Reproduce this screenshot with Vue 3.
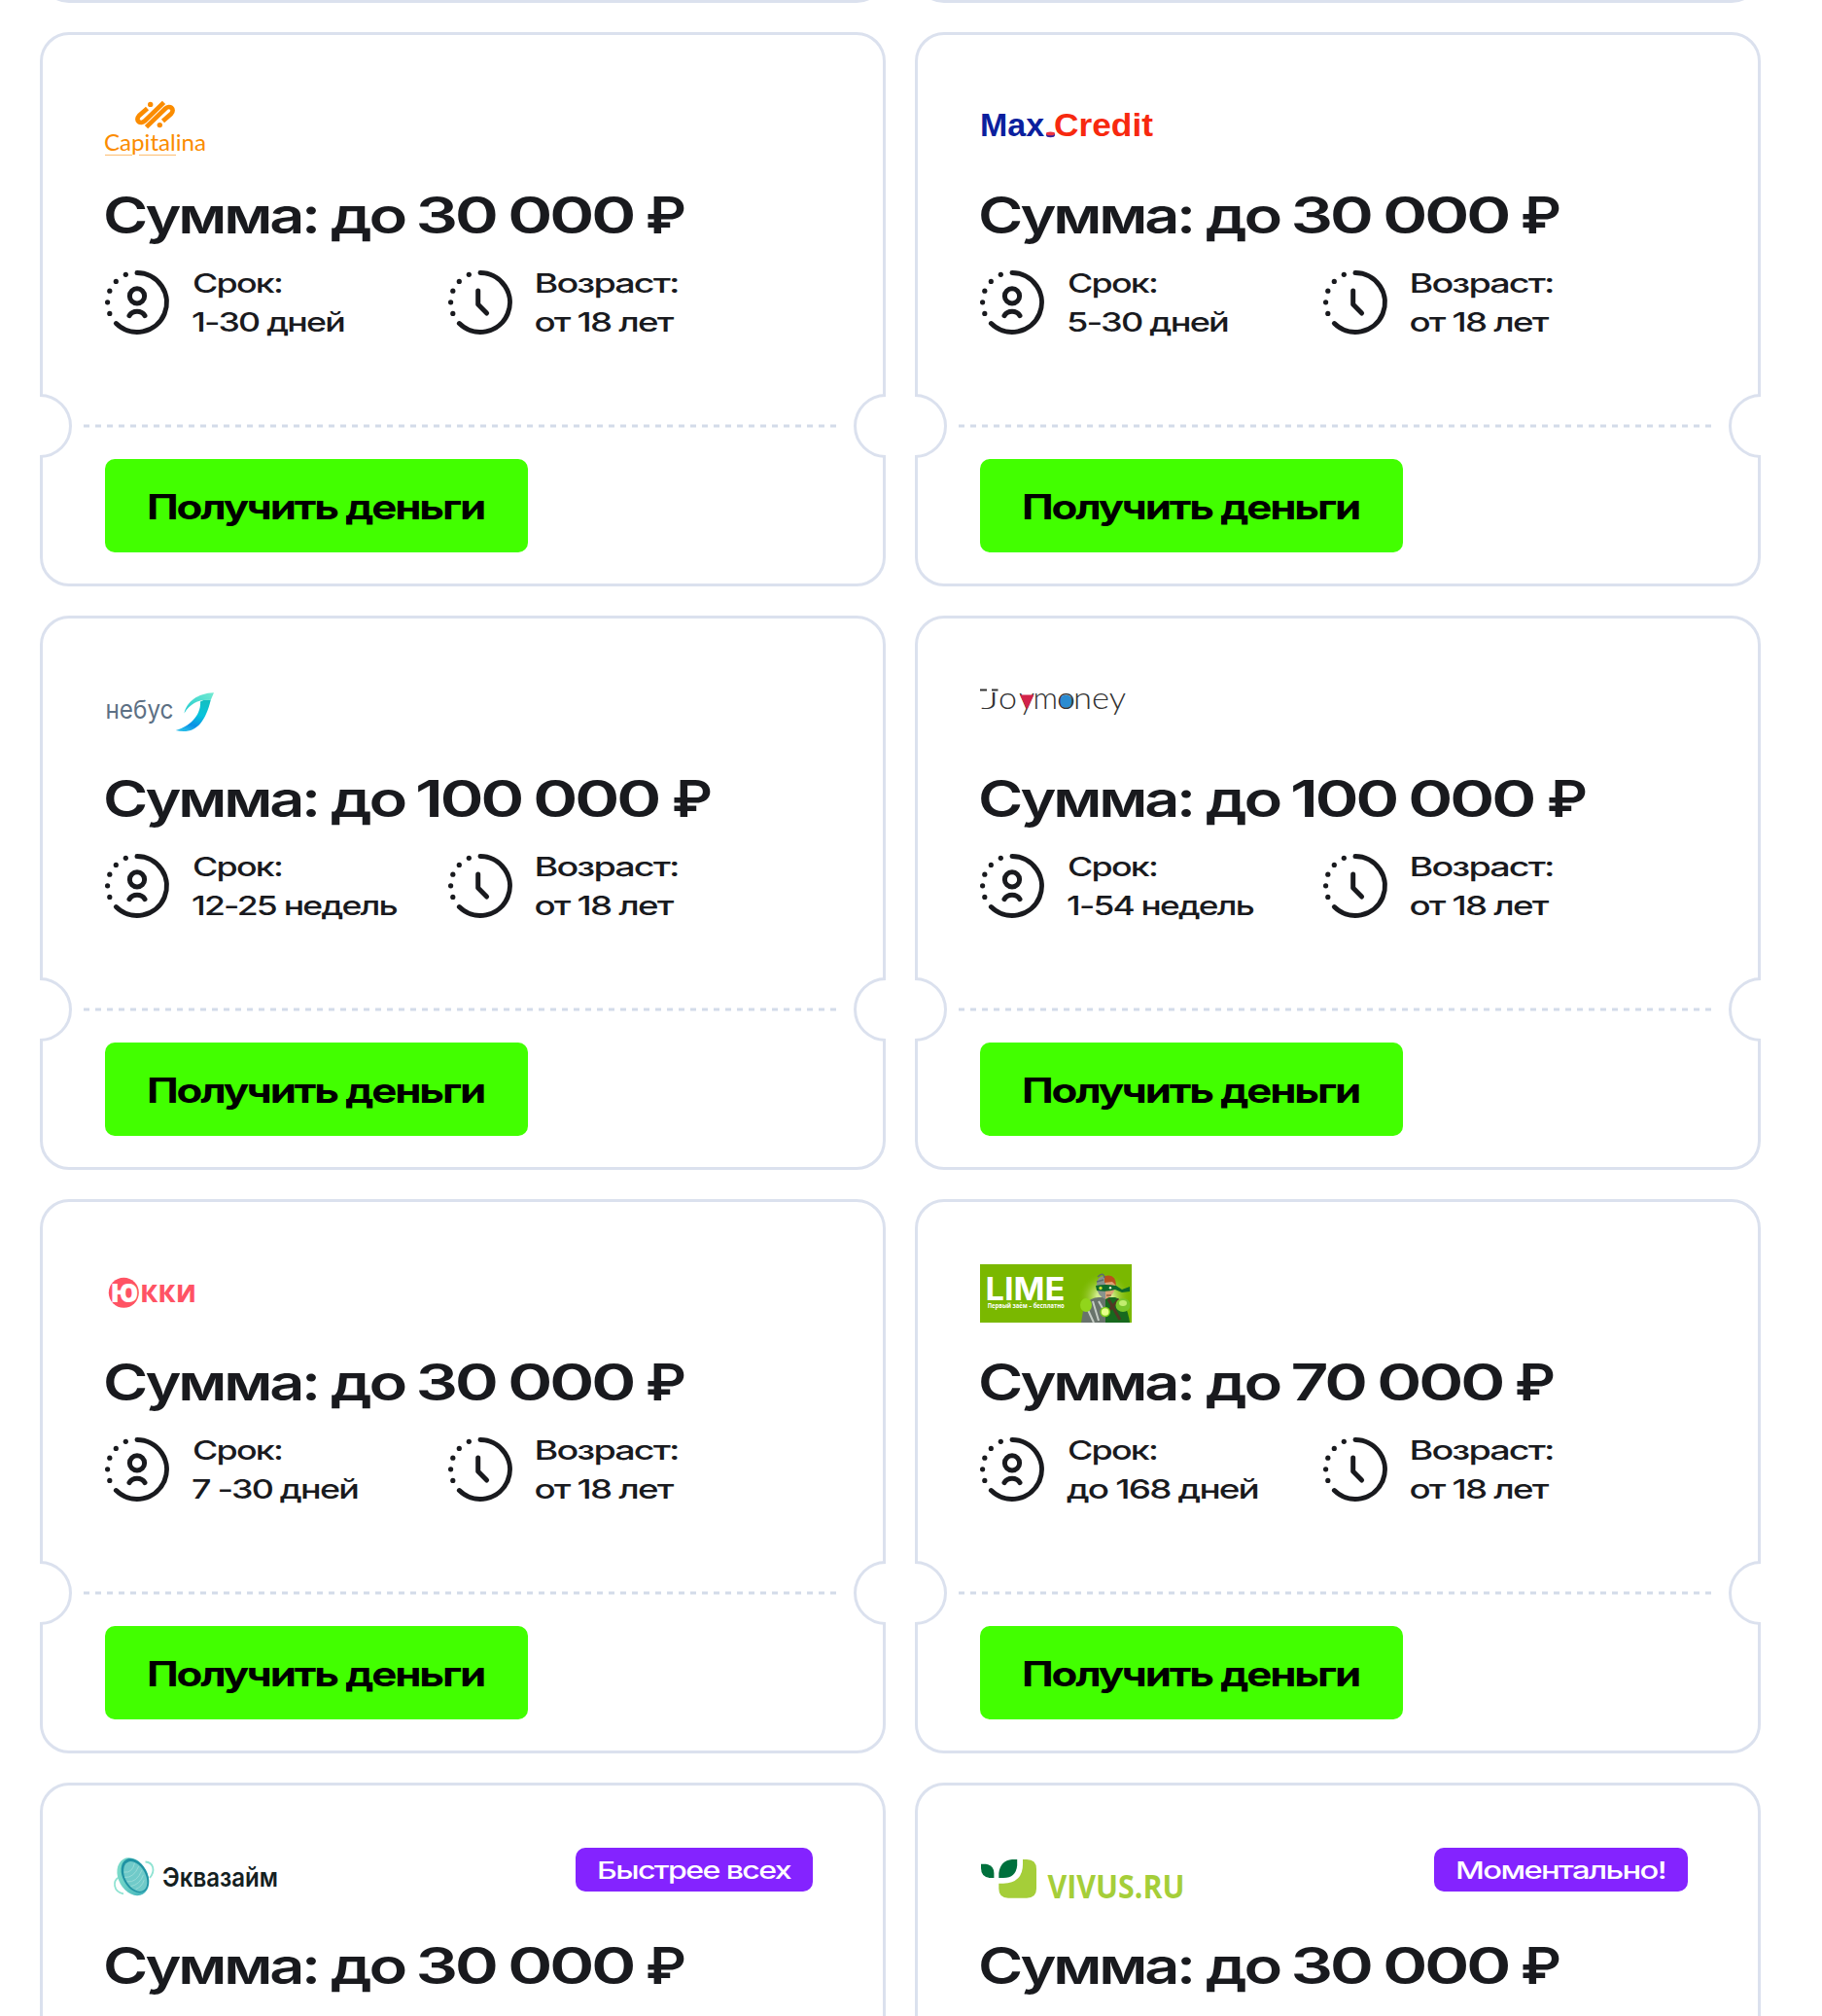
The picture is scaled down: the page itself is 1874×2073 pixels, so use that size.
<template>
  <div class="offers-page">
    <div class="offers-grid">
      <!-- Bottom edge of the previous row -->
      <div class="card-tail"></div>
      <div class="card-tail"></div>

      <div v-for="offer in offers" :key="offer.logo" class="offer-card">
        <div class="offer-header">
          <svg v-if="offer.logo === 'capitalina'" class="logo" width="180" height="60" fill="#fb8c00">
            <g fill="none" stroke="#fb8c00" stroke-width="4.7">
              <path d="M43.5 11.5L35 19C30.5 24 36.5 28.5 41 24.3L60.5 5.4" />
              <path d="M59.5 24.5L68 17C72.5 12 66.5 7.5 62 11.7L42.5 30.6" />
            </g>
            <circle cx="46.7" cy="7.4" r="2.7" />
            <circle cx="56.3" cy="28.6" r="2.7" />
            <text x="-1" y="55" class="lato" font-size="23" textLength="105" lengthAdjust="spacingAndGlyphs">Capitalina</text>
            <path d="M0 59.4H28M35 59.4H73" stroke="#fdbb6c" stroke-width="1" />
          </svg>

          <svg v-else-if="offer.logo === 'maxcredit'" class="logo" width="190" height="60">
            <g class="liberation" font-size="33" font-weight="700">
              <text x="0" y="40" fill="#0b1f9e" textLength="66" lengthAdjust="spacingAndGlyphs">Max</text>
              <text x="76" y="40" fill="#f7290f" textLength="102" lengthAdjust="spacingAndGlyphs">Credit</text>
            </g>
            <ellipse cx="72.5" cy="38.8" rx="4.6" ry="2.5" fill="#3b2597" />
            <ellipse cx="72.5" cy="37.4" rx="4.6" ry="1.8" fill="#ec3341" />
          </svg>

          <svg v-else-if="offer.logo === 'nebus'" class="logo" width="180" height="60">
            <defs>
              <linearGradient id="wing" x1="0" y1="1" x2="1" y2="0">
                <stop offset="0" stop-color="#1ecbd0" />
                <stop offset="1" stop-color="#74ead0" />
              </linearGradient>
              <linearGradient id="tail" x1="0.7" y1="0" x2="0.4" y2="1">
                <stop offset="0" stop-color="#12bfc2" />
                <stop offset="0.45" stop-color="#08c4dc" />
                <stop offset="0.8" stop-color="#0a8fe6" />
                <stop offset="1" stop-color="#25b9e8" />
              </linearGradient>
            </defs>
            <text x="0.5" y="39" class="inter nebus" font-size="26" fill="#5c7084" textLength="70" lengthAdjust="spacingAndGlyphs">небус</text>
            <path d="M108.7 20C104 19 101 20 98 21.5C99 32 91 46 72.7 51C92 56 103 44 108.7 20Z" fill="url(#tail)" />
            <path d="M81.5 33.5C84 22 95 12.8 112 12.3L108.7 20C97 19 88 23 81.5 33.5Z" fill="url(#wing)" />
          </svg>

          <svg v-else-if="offer.logo === 'joymoney'" class="logo" width="180" height="60">
            <circle cx="88.5" cy="21.3" r="6.8" fill="#2b8bd0" />
            <g class="lato joy" font-size="32" fill="#333">
              <text x="1" y="28.8" textLength="18.5" lengthAdjust="spacingAndGlyphs" font-size="23">J</text>
              <text x="19" y="29" textLength="19" lengthAdjust="spacingAndGlyphs">o</text>
              <text x="40" y="29" textLength="16" lengthAdjust="spacingAndGlyphs">y</text>
              <text x="54.5" y="29" textLength="25.5" lengthAdjust="spacingAndGlyphs">m</text>
              <text x="79" y="29" textLength="19" lengthAdjust="spacingAndGlyphs">o</text>
              <text x="96" y="29" textLength="54" lengthAdjust="spacingAndGlyphs">ney</text>
            </g>
            <path d="M41 14.5H55.5L48.5 29.5Z" fill="#d3234a" />
            <path d="M0 9.4H7M12 9.4H18.5" stroke="#333" stroke-width="2" />
          </svg>

          <svg v-else-if="offer.logo === 'yukki'" class="logo" width="180" height="60">
            <circle cx="19.3" cy="29.3" r="15.5" fill="#ff5364" />
            <g class="opensans" font-weight="700">
              <text x="5.5" y="39" font-size="27" font-weight="800" fill="#fff" textLength="29" lengthAdjust="spacingAndGlyphs">Ю</text>
              <text x="36" y="39" font-size="32" fill="#ff5364" textLength="58" lengthAdjust="spacingAndGlyphs">кки</text>
            </g>
          </svg>

          <svg v-else-if="offer.logo === 'lime'" class="logo" width="156" height="60">
            <defs>
              <radialGradient id="glow">
                <stop offset="0.3" stop-color="#d2ec8e" />
                <stop offset="1" stop-color="#7ab800" stop-opacity="0" />
              </radialGradient>
            </defs>
            <rect width="156" height="60" fill="#7ab800" />
            <ellipse cx="128" cy="34" rx="27" ry="26" fill="url(#glow)" />
            <g font-weight="700" fill="#fff">
              <text x="5.5" y="36.7" class="inter" font-size="32" textLength="82" lengthAdjust="spacingAndGlyphs">LIME</text>
              <text x="7.7" y="44.8" class="opensans" font-size="6.6" textLength="79" lengthAdjust="spacingAndGlyphs">Первый заём – бесплатно</text>
            </g>
            <!-- Half robot, half hero -->
            <path d="M104 60L107 42Q114 34 122 34H129V60Z" fill="#68736b" />
            <path d="M129 34H139Q151 38 154 60H129Z" fill="#17691e" />
            <path d="M116 38L122 58M111 47L117 60M122 38L127 47" stroke="#c5ccc5" stroke-width="2" />
            <path d="M132 36L144 57M143 36L133 47" stroke="#513723" stroke-width="3" />
            <path d="M129 12Q120 11 120 22Q120 32 129 36Z" fill="#88938e" />
            <path d="M129 12Q139 12 139 23Q138 32 129 36Z" fill="#dda375" />
            <path d="M128 19V12Q140 9 140 22L136 18Z" fill="#b9511d" />
            <path d="M121 13Q127 7 128 14M120 18L127 16" fill="none" stroke="#5c6d6c" stroke-width="1.5" />
            <path d="M119 22Q129 20 140 22L146 26L154 23V28L146 29L139 26Q131 29 120 27Z" fill="#0e6a2a" />
            <circle cx="124" cy="24.5" r="1.7" fill="#c8df32" />
            <circle cx="134" cy="24.2" r="1.2" fill="#f4f0d6" />
            <path d="M130 32H135" stroke="#733d2b" />
            <ellipse cx="109" cy="42" rx="6" ry="7" fill="#91d51b" />
            <ellipse cx="147" cy="42" rx="7.5" ry="7" fill="#79c52a" />
            <ellipse cx="147" cy="40" rx="4" ry="3" fill="#c2ed70" />
            <circle cx="128.7" cy="49" r="5.3" fill="#7cce18" />
            <circle cx="128.7" cy="49" r="3.8" fill="#e7ff8a" />
          </svg>

          <svg v-else-if="offer.logo === 'ekvazaym'" class="logo" width="190" height="60">
            <defs>
              <linearGradient id="coin" x1="0" y1="0" x2="1" y2="1">
                <stop offset="0" stop-color="#8ae5cd" />
                <stop offset="1" stop-color="#2ba3b6" />
              </linearGradient>
            </defs>
            <g fill="none" stroke="#8fe3d2" stroke-width="1.8">
              <path d="M14 30.5C8 34 8 45 19 47.4" />
              <path d="M41.5 14.5C50 15 52 24 46 31" />
            </g>
            <g transform="rotate(-29 29.3 29.5)">
              <ellipse cx="28.8" cy="29.5" rx="15" ry="20.6" fill="url(#coin)" />
              <ellipse cx="31" cy="29.5" rx="12.4" ry="18.8" fill="#1f92a3" />
              <ellipse cx="31" cy="30.4" rx="10.4" ry="16.6" fill="#70cac9" />
              <g fill="none" stroke="#a1deda" stroke-width="0.7">
                <path d="M23 21Q30 26 37 18" />
                <path d="M21 26Q29 31 39 23" />
                <path d="M21 31Q29 37 40 28" />
                <path d="M22 37Q31 40 39 33" />
                <path d="M25 42Q32 43 37 38" />
              </g>
            </g>
            <text x="59" y="40" class="inter" font-size="26.5" font-weight="600" fill="#14201f" textLength="119" lengthAdjust="spacingAndGlyphs">Эквазайм</text>
          </svg>

          <svg v-else class="logo" width="220" height="60">
            <path d="M1 16.7H6Q14.4 18 14.4 26V31H10Q1 30 1 21Z" fill="#00703c" />
            <path d="M38.2 12V18Q37 31 24 31H19.3V26Q21 13 33 12Z" fill="#00703c" />
            <path d="M44 12H48Q58 12 58 22V42Q58 51.7 48 51.7H29Q19.3 51.7 19.3 42V36.7H24Q44 36 44 17Z" fill="#a5ce39" />
            <text x="69.5" y="51.5" class="opensans" font-size="34" font-weight="700" fill="#a5ce39" textLength="141" lengthAdjust="spacingAndGlyphs">VIVUS.RU</text>
          </svg>

          <span v-if="offer.badge" class="badge">
            <svg :width="offer.badgeWidth" height="45">
              <text x="-1" y="32.3" :textLength="offer.badgeWidth + 1" lengthAdjust="spacingAndGlyphs">{{ offer.badge }}</text>
            </svg>
          </span>
        </div>

        <svg class="offer-title" width="736" height="60">
          <text x="-2" y="49.5" textLength="221" lengthAdjust="spacingAndGlyphs">Сумма:</text>
          <text x="232" y="49.5" textLength="76" lengthAdjust="spacingAndGlyphs">до</text>
          <text
            v-for="part in amounts[offer.amount]"
            :key="part.x"
            :x="part.x"
            y="49.5"
            :textLength="part.width"
            lengthAdjust="spacingAndGlyphs"
          >{{ part.text }}</text>
        </svg>

        <template v-if="offer.term">
          <div class="offer-details">
            <div class="detail">
              <svg class="detail-icon" width="66" height="66">
                <path d="M33 2.5A30.5 30.5 0 1 1 11.4 54.6" />
                <circle v-for="dot in dots" :key="dot[1]" class="dot" :cx="dot[0]" :cy="dot[1]" r="2.6" />
                <circle cx="33" cy="26.4" r="7.6" />
                <path d="M25 46.6C28.5 40.8 37.5 40.8 41 46.6" />
              </svg>
              <svg class="detail-text" width="240" height="80">
                <text x="0" y="30" textLength="92" lengthAdjust="spacingAndGlyphs">Срок:</text>
                <text x="-1" y="70" :textLength="offer.termWidth" lengthAdjust="spacingAndGlyphs">{{ offer.term }}</text>
              </svg>
            </div>
            <div class="detail">
              <svg class="detail-icon" width="66" height="66">
                <path d="M33 2.5A30.5 30.5 0 1 1 11.4 54.6" />
                <circle v-for="dot in dots" :key="dot[1]" class="dot" :cx="dot[0]" :cy="dot[1]" r="2.6" />
                <path d="M30.7 20.9V35L39.6 44" />
              </svg>
              <svg class="detail-text" width="160" height="80">
                <text x="-1.5" y="30" textLength="148" lengthAdjust="spacingAndGlyphs">Возраст:</text>
                <text x="-1.5" y="70" textLength="142" lengthAdjust="spacingAndGlyphs">от 18 лет</text>
              </svg>
            </div>
          </div>

          <svg class="divider" width="870" height="66">
            <circle cx="0" cy="33" r="31.5" />
            <circle cx="870" cy="33" r="31.5" />
            <path d="M45 33H820" />
          </svg>

          <button class="offer-btn">
            <svg width="345" height="96">
              <text x="-2" y="61.7" textLength="347" lengthAdjust="spacingAndGlyphs">Получить деньги</text>
            </svg>
          </button>
        </template>
      </div>
    </div>
  </div>
</template>

<script setup>
// Dotted part of the round icons
const dots = [
  [21.3, 4.3],
  [11.3, 11.4],
  [4.8, 21.2],
  [2.6, 32.8],
  [4.8, 44.4],
];

const amounts = {
  30000: [
    { text: '30', x: 319.5, width: 82 },
    { text: '000', x: 414, width: 129 },
    { text: '₽', x: 556, width: 39 },
  ],
  70000: [
    { text: '70', x: 319.5, width: 76 },
    { text: '000', x: 408, width: 129 },
    { text: '₽', x: 550, width: 39 },
  ],
  100000: [
    { text: '100', x: 319, width: 109 },
    { text: '000', x: 440, width: 129 },
    { text: '₽', x: 583, width: 39 },
  ],
};

const offers = [
  { logo: 'capitalina', amount: 30000, term: '1-30 дней', termWidth: 157 },
  { logo: 'maxcredit', amount: 30000, term: '5-30 дней', termWidth: 166 },
  { logo: 'nebus', amount: 100000, term: '12-25 недель', termWidth: 211 },
  { logo: 'joymoney', amount: 100000, term: '1-54 недель', termWidth: 192 },
  { logo: 'yukki', amount: 30000, term: '7 -30 дней', termWidth: 171 },
  { logo: 'lime', amount: 70000, term: 'до 168 дней', termWidth: 197 },
  { logo: 'ekvazaym', amount: 30000, badge: 'Быстрее всех', badgeWidth: 198 },
  { logo: 'vivus', amount: 30000, badge: 'Моментально!', badgeWidth: 215 },
];
</script>

<style>
body {
  margin: 0;
  background: #fff;
}
</style>

<style scoped>
.offers-page {
  height: 2073px;
  overflow: hidden;
  font-family: Inter, "Open Sans", sans-serif;
}

.offers-grid {
  display: grid;
  grid-template-columns: 870px 870px;
  grid-template-rows: 3px repeat(4, 570px);
  gap: 30px;
  padding-left: 41px;
}

.card-tail {
  box-sizing: border-box;
  height: 90px;
  margin-top: -87px;
  border: 3px solid #dbe1ee;
  border-radius: 30px;
}

.offer-card {
  box-sizing: border-box;
  display: flex;
  flex-direction: column;
  align-items: flex-start;
  padding: 64px;
  border: 3px solid #dbe1ee;
  border-radius: 30px;
}

svg {
  display: block;
  overflow: visible;
  flex-shrink: 0;
}

.offer-header {
  display: flex;
  justify-content: space-between;
  align-items: flex-start;
  width: 728px;
  height: 60px;
}

.lato {
  font-family: Lato, sans-serif;
}

.joy {
  font-weight: 300;
}

.liberation {
  font-family: "Liberation Sans", sans-serif;
}

.opensans {
  font-family: "Open Sans", sans-serif;
}

.inter {
  font-family: Inter, sans-serif;
}

.badge {
  height: 45px;
  padding: 0 23px;
  border-radius: 10px;
  background: #8423ff;
  font-size: 24.7px;
  font-weight: 500;
  letter-spacing: -0.05em;
  fill: #fff;
}

.offer-title {
  margin-top: 30px;
  font-size: 52px;
  font-weight: 600;
  letter-spacing: -0.05em;
  fill: #191a1e;
}

.offer-details {
  display: flex;
  height: 80px;
  margin-top: 21px;
}

.detail {
  display: flex;
  align-items: center;
  gap: 24px;
  width: 353px;
}

.detail-icon {
  fill: none;
  stroke: #191a1e;
  stroke-width: 5;
  stroke-linecap: round;
  stroke-linejoin: round;
}

.detail-icon .dot {
  fill: #191a1e;
  stroke: none;
}

.detail-text {
  font-size: 27.5px;
  font-weight: 450;
  letter-spacing: -0.05em;
  fill: #191a1e;
}

.divider {
  margin: 54px 0 0 -67px;
  overflow: hidden;
  fill: #fff;
  stroke: #dbe1ee;
  stroke-width: 3;
}

.divider path {
  stroke: #d3dbe9;
  stroke-dasharray: 6 6;
}

.offer-btn {
  height: 96px;
  margin-top: 1px;
  padding: 0 45px;
  border: none;
  border-radius: 10px;
  background: #42ff00;
  font-family: inherit;
  font-size: 35px;
  font-weight: 650;
  letter-spacing: -0.05em;
  fill: #000;
  cursor: pointer;
}
</style>
